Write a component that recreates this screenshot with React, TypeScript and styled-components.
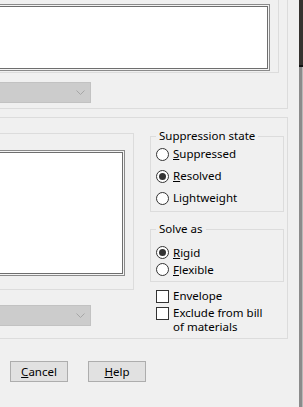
import React from 'react'
import styled, { createGlobalStyle } from 'styled-components'

const GlobalStyle = createGlobalStyle`
  html, body {
    margin: 0;
    padding: 0;
    background: #f0f0f0;
  }
  body {
    font-family: "Noto Sans", "Open Sans", sans-serif;
    font-size: 11.5px;
    color: #000;
  }
`

const Window = styled.div`
  width: 303px;
  height: 407px;
  display: flex;
  overflow: hidden;
  background: #f0f0f0;
`

const Main = styled.div`
  width: 299px;
  display: flex;
  flex-direction: column;
  overflow: hidden;
`

const Edge = styled.div`
  width: 4px;
  display: flex;
  flex-direction: column;
`

const EdgeTop = styled.div`
  height: 65px;
  background: #35322f;
  border-bottom: 2px solid #111;
`

const EdgeRest = styled.div`
  flex: 1;
  background: #8b8b8b;
  border-right: 1px solid #b8b8b8;
`

const TopGroup = styled.div`
  box-sizing: border-box;
  width: 288px;
  height: 109px;
  border-right: 1px solid #dcdcdc;
  border-bottom: 1px solid #dcdcdc;
`

const ListFrame = styled.div`
  box-sizing: border-box;
  width: ${p => p.$w}px;
  height: ${p => p.$h}px;
  padding-top: ${p => p.$pad}px;
  border-right: 1px solid #dcdcdc;
  border-bottom: 1px solid #dcdcdc;
  border-top: ${p => (p.$top ? '1px solid #dcdcdc' : 'none')};
`

const ListBox = styled.div`
  box-sizing: border-box;
  margin-left: -4px;
  width: ${p => p.$w}px;
  height: ${p => p.$h}px;
  background: #fff;
  border: 1px solid #8a8a8a;
  box-shadow: inset 0 0 0 1px #f4f4f4, inset 0 0 0 2px #6e6e6e;
`

const Dropdown = styled.div`
  box-sizing: border-box;
  margin-left: -4px;
  margin-top: ${p => p.$mt}px;
  width: 95px;
  height: 21px;
  background: #cccccc;
  border: 1px solid #c2c2c2;
  display: flex;
  align-items: center;
  justify-content: flex-end;
  padding-right: 5px;
`

const MidGroup = styled.div`
  box-sizing: border-box;
  margin-top: 8px;
  width: 288px;
  height: 222px;
  border-top: 1px solid #dcdcdc;
  border-right: 1px solid #dcdcdc;
  border-bottom: 1px solid #dcdcdc;
  display: flex;
  gap: 16px;
`

const LeftCol = styled.div`
  width: 134px;
  padding-top: 15px;
  display: flex;
  flex-direction: column;
`

const RightCol = styled.div`
  width: 134px;
  padding-top: 11px;
  display: flex;
  flex-direction: column;
`

const Group = styled.fieldset`
  box-sizing: border-box;
  margin: ${p => p.$mt}px 0 0 0;
  padding: 0 5px ${p => p.$pb}px 5px;
  border: 1px solid #dcdcdc;
  min-width: 0;
  width: 134px;
`

const Legend = styled.legend`
  padding: 0 3px;
  margin-left: 0;
  line-height: 14px;
`

const OptionRow = styled.label`
  display: flex;
  align-items: center;
  gap: 4px;
  height: ${p => p.$h}px;
  margin-top: ${p => p.$mt || 0}px;
  line-height: 14px;
  white-space: nowrap;
`

const Radio = styled.span`
  box-sizing: border-box;
  width: 13px;
  height: 13px;
  border-radius: 50%;
  border: 1px solid #333;
  background: #fff;
  display: flex;
  align-items: center;
  justify-content: center;
  flex: none;

  &::after {
    content: '';
    width: 7px;
    height: 7px;
    border-radius: 50%;
    background: ${p => (p.$on ? '#333' : 'transparent')};
  }
`

const CheckRow = styled.label`
  display: flex;
  align-items: flex-start;
  gap: 4px;
  padding-left: 6px;
  margin-top: ${p => p.$mt}px;
  line-height: 14px;
`

const Check = styled.span`
  box-sizing: border-box;
  width: 13px;
  height: 13px;
  border: 1px solid #333;
  background: #fff;
  flex: none;
  margin-top: 1px;
`

const ButtonRow = styled.div`
  display: flex;
  gap: 20px;
  margin-top: 22px;
  padding-left: 10px;
`

const Button = styled.button`
  box-sizing: border-box;
  width: 58px;
  height: 21px;
  background: #e1e1e1;
  border: 1px solid #adadad;
  font-family: inherit;
  font-size: 11.5px;
  color: #000;
  padding: 0;
  line-height: 14px;
`

const Chevron = () => (
  <svg width="9" height="6" viewBox="0 0 9 6">
    <path d="M0.5 0.5 L4.5 4.5 L8.5 0.5" fill="none" stroke="#a6a6a6" strokeWidth="1" />
  </svg>
)

export default function App() {
  return (
    <Window>
      <GlobalStyle />
      <Main>
        <TopGroup>
          <ListFrame $w={279} $h={73} $pad={4}>
            <ListBox $w={274} $h={67} />
          </ListFrame>
          <Dropdown $mt={9}>
            <Chevron />
          </Dropdown>
        </TopGroup>

        <MidGroup>
          <LeftCol>
            <ListFrame $w={134} $h={157} $pad={16} $top>
              <ListBox $w={129} $h={126} />
            </ListFrame>
            <Dropdown $mt={15}>
              <Chevron />
            </Dropdown>
          </LeftCol>

          <RightCol>
            <Group $mt={0} $pb={2}>
              <Legend>Suppression state</Legend>
              <OptionRow $h={22}>
                <Radio />
                <span><u>S</u>uppressed</span>
              </OptionRow>
              <OptionRow $h={22}>
                <Radio $on />
                <span><u>R</u>esolved</span>
              </OptionRow>
              <OptionRow $h={22}>
                <Radio />
                <span>Lightweight</span>
              </OptionRow>
            </Group>

            <Group $mt={10} $pb={3}>
              <Legend>Solve as</Legend>
              <OptionRow $h={17} $mt={8}>
                <Radio $on />
                <span><u>R</u>igid</span>
              </OptionRow>
              <OptionRow $h={17}>
                <Radio />
                <span><u>F</u>lexible</span>
              </OptionRow>
            </Group>

            <CheckRow $mt={7}>
              <Check />
              <span>Envelope</span>
            </CheckRow>
            <CheckRow $mt={3}>
              <Check />
              <span>Exclude from bill<br />of materials</span>
            </CheckRow>
          </RightCol>
        </MidGroup>

        <ButtonRow>
          <Button><u>C</u>ancel</Button>
          <Button><u>H</u>elp</Button>
        </ButtonRow>
      </Main>
      <Edge>
        <EdgeTop />
        <EdgeRest />
      </Edge>
    </Window>
  )
}
